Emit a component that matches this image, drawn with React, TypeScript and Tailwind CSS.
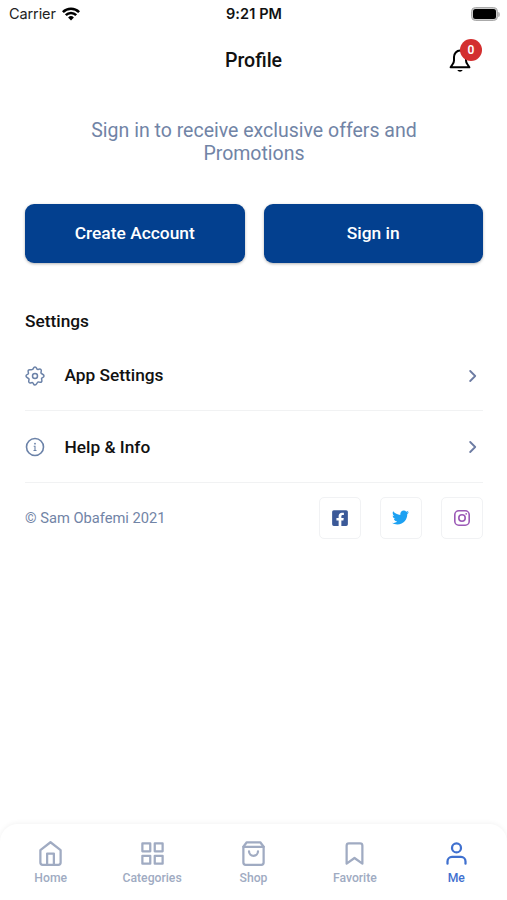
import { ReactNode } from 'react';
import { FiHome, FiGrid, FiShoppingBag, FiBookmark, FiUser } from 'react-icons/fi';
import { FaFacebookSquare, FaTwitter } from 'react-icons/fa';

function StatusBar() {
    return (
        <div className="grid h-7 grid-cols-3 items-center font-['Inter',sans-serif]">
            <div className="flex items-center pl-[9px] text-[14.5px] leading-none text-[#222]">
                <span className="tracking-[-0.1px]">Carrier</span>
                <svg className="ml-[6px]" width="18" height="14" viewBox="0 0 18 14" fill="none" stroke="#000" strokeWidth="2.6">
                    <path d="M.9 5.1a11.5 11.5 0 0 1 16.2 0" />
                    <path d="M3.8 8.2a7.4 7.4 0 0 1 10.4 0" />
                    <path d="M9 13.4 6.1 10.5a4.1 4.1 0 0 1 5.8 0Z" fill="#000" stroke="none" />
                </svg>
            </div>
            <div className="pt-px pl-px text-center text-[14.5px] leading-none font-semibold tracking-[0.1px] text-[#111]">9:21 PM</div>
            <div className="flex items-center justify-end pr-[7px]">
                <div className="h-[14px] w-[27px] rounded-[4.5px] border border-[#aaa] bg-[#ccc] p-px">
                    <div className="h-full rounded-[2.5px] bg-black" />
                </div>
                <div className="h-[5px] w-[2px] rounded-r-full bg-[#bbb]" />
            </div>
        </div>
    );
}

function Header() {
    return (
        <div className="grid h-16 grid-cols-3 items-center">
            <div />
            <div className="pt-px text-center text-[19.6px] font-medium text-[#111]">Profile</div>
            <div className="flex justify-end pr-[35px]">
                <div className="relative">
                    <svg width="24" height="26" viewBox="0 0 24 26" fill="none" stroke="#000" strokeWidth="2" strokeLinejoin="round">
                        <path d="M6 10a6 6.4 0 0 1 12 0v3.6c0 1.6.5 2.4 1.4 3.7l2 3H2.6l2-3C5.500 16 6 15.200 6 13.600Z" />
                        <path d="M9.400 23h5.200c-.8 2.200-4.400 2.200-5.200 0Z" fill="#000" stroke="none" />
                    </svg>
                    <div className="absolute -top-[8px] left-[12px] flex size-[22px] items-center justify-center rounded-full bg-[#d32f2f] text-[12px] font-semibold text-white">
                        0
                    </div>
                </div>
            </div>
        </div>
    );
}

function GearIcon() {
    return (
        <svg width="20" height="20" viewBox="0 0 20 20" fill="none" stroke="currentColor" strokeWidth="1.5" strokeLinejoin="round">
            <path d="M7.600 3.400C8.500 3 8.300 1 10 1s1.500 2 2.400 2.400c1 .4 2.300-1.100 3.500.1s-.3 2.500.1 3.500C17 8.500 19 8.300 19 10s-2 1.500-2.400 2.400c-.4 1 1.100 2.300-.1 3.500s-2.500-.3-3.500.1C11.500 17 11.700 19 10 19s-1.500-2-2.400-2.400c-1-.4-2.300 1.100-3.500-.1s.3-2.500-.1-3.500C3 11.500 1 11.700 1 10s2-1.500 2.400-2.400c.4-1-1.100-2.300.1-3.500s2.500.3 4.100-.7Z" />
            <circle cx="10" cy="10" r="2.500" />
        </svg>
    );
}

function InfoIcon() {
    return (
        <svg width="20" height="20" viewBox="0 0 20 20" fill="none" stroke="currentColor" strokeWidth="1.6">
            <circle cx="10" cy="10" r="8.5" />
            <path d="M8.7 9.2H10v4.3M8.5 13.5h3" strokeWidth="1.1" />
            <circle cx="10" cy="6.7" r=".9" fill="currentColor" stroke="none" />
        </svg>
    );
}

function SettingRow({ icon, label }: { icon: ReactNode; label: string }) {
    return (
        <div className="flex h-[71.5px] items-center border-b border-[#f1f2f3] pt-[2px]">
            <div className="w-[39.5px] text-[#6b82a8]">{icon}</div>
            <div className="grow pt-px text-[17.3px] font-medium text-[#111]">{label}</div>
            <svg className="mr-[6px]" width="8" height="12" viewBox="0 0 8 12" fill="none" stroke="#6d7ca3" strokeWidth="1.8" strokeLinecap="round" strokeLinejoin="round">
                <path d="m1.2 1 5 5-5 5" />
            </svg>
        </div>
    );
}

function SocialButton({ children }: { children: ReactNode }) {
    return (
        <div className="flex size-[42px] items-center justify-center rounded-[5px] border border-[#f1f2f4] pr-px pb-px">
            {children}
        </div>
    );
}

const tabs = [
    { label: 'Home', Icon: FiHome },
    { label: 'Categories', Icon: FiGrid },
    { label: 'Shop', Icon: FiShoppingBag },
    { label: 'Favorite', Icon: FiBookmark },
    { label: 'Me', Icon: FiUser, active: true },
];

function TabBar() {
    return (
        <div className="grid h-[76px] grid-cols-5 rounded-t-[18px] bg-white shadow-[0_-1px_5px_rgba(0,0,0,0.05)]">
            {tabs.map(({ label, Icon, active }) => (
                <div key={label} className={active ? 'flex flex-col items-center pt-4 text-[#3f70cf]' : 'flex flex-col items-center pt-4 text-[#a0abc2]'}>
                    <Icon size={27} />
                    <div className="mt-[3px] text-[12.2px] leading-4 font-medium">{label}</div>
                </div>
            ))}
        </div>
    );
}

function App() {
    return (
        <div className="flex h-[900px] w-[507px] flex-col overflow-hidden bg-white font-['Roboto',sans-serif]">
            <StatusBar />
            <Header />
            <div className="grow pr-[24px] pl-[25px]">
                <div className="pt-[27px] text-center text-[19.5px] leading-[23px] text-[#7184a6]">
                    Sign in to receive exclusive offers and
                    <br />
                    Promotions
                </div>
                <div className="mt-[39px] grid grid-cols-2 gap-[19px] text-[17.4px] font-medium text-white">
                    <button className="h-[59px] rounded-[9px] bg-[#03408f] shadow-[0_1px_3px_rgba(0,0,0,0.3)]">Create Account</button>
                    <button className="h-[59px] rounded-[9px] bg-[#03408f] shadow-[0_1px_3px_rgba(0,0,0,0.3)]">Sign in</button>
                </div>
                <div className="mt-[46px] text-[17.3px] leading-6 font-medium text-[#111]">Settings</div>
                <div className="mt-[6.5px]">
                    <SettingRow icon={<GearIcon />} label="App Settings" />
                    <SettingRow icon={<InfoIcon />} label="Help & Info" />
                </div>
                <div className="mt-[14.5px] flex items-center justify-between">
                    <div className="text-[14.7px] text-[#7184a6]">© Sam Obafemi 2021</div>
                    <div className="flex gap-[19px]">
                        <SocialButton>
                            <FaFacebookSquare size={18} color="#3b5998" />
                        </SocialButton>
                        <SocialButton>
                            <FaTwitter size={17} color="#1da1f2" />
                        </SocialButton>
                        <SocialButton>
                            <svg width="16" height="16" viewBox="0 0 16 16" fill="none" stroke="#9b59b6" strokeWidth="1.6">
                                <rect x=".8" y=".8" width="14.4" height="14.4" rx="4" />
                                <circle cx="8" cy="8" r="3.2" />
                                <circle cx="12.2" cy="3.8" r=".9" fill="#9b59b6" stroke="none" />
                            </svg>
                        </SocialButton>
                    </div>
                </div>
            </div>
            <TabBar />
        </div>
    );
}

export default App;
